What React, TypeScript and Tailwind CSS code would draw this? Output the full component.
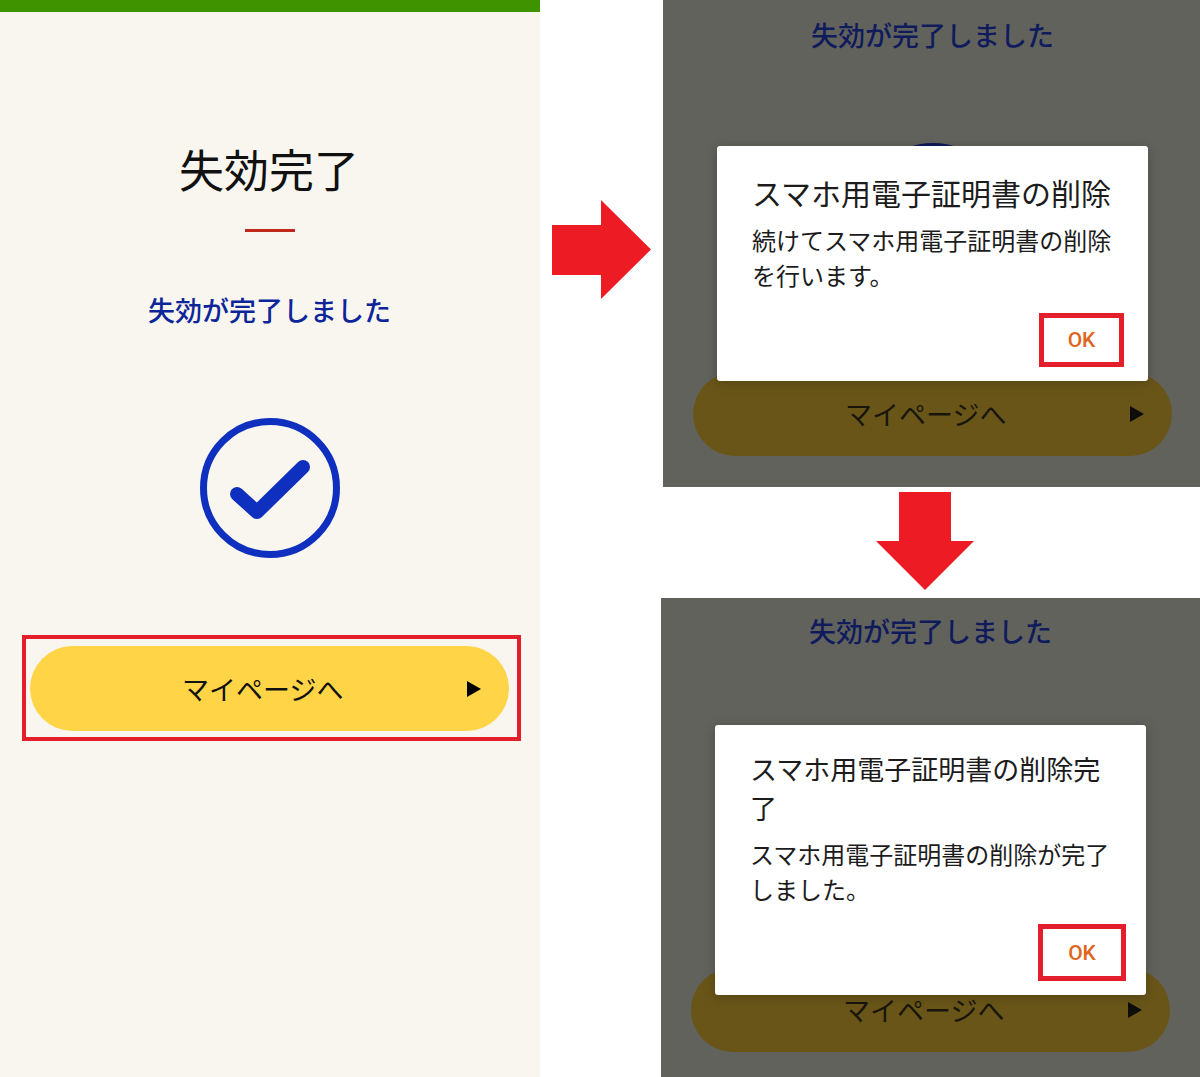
import type { ReactNode } from "react";

const jp = "font-['Noto_Sans_CJK_JP','Noto_Sans',sans-serif]";

function RightArrow() {
  return (
    <svg width="99" height="99" viewBox="0 0 99 99" className="block" aria-hidden="true">
      <path d="M0 25H49V0L99 49.5L49 99V75H0Z" fill="#ed1c24" />
    </svg>
  );
}

function DownArrow() {
  return (
    <svg width="98" height="98" viewBox="0 0 98 98" className="block" aria-hidden="true">
      <path d="M23 0H75V49H98L49 98L0 49H23Z" fill="#ed1c24" />
    </svg>
  );
}

function CheckCircle({ color }: { color: string }) {
  return (
    <svg width="140" height="140" viewBox="0 0 140 140" className="block" aria-hidden="true">
      <circle cx="70" cy="70" r="66.5" fill="none" stroke={color} strokeWidth="7" />
      <path d="M37 76L57 94L103 49" fill="none" stroke={color} strokeWidth="14" strokeLinecap="round" strokeLinejoin="round" />
    </svg>
  );
}

function Pill({ dimmed }: { dimmed?: boolean }) {
  return (
    <div className={`flex w-[479px] items-center rounded-full ${dimmed ? "h-[84px] bg-[#695518]" : "h-[85px] bg-[#ffd447]"}`}>
      <span className={`ml-[152px] text-[27px] leading-[34px] ${dimmed ? "text-[#17150c]" : "text-[#111111]"}`}>マイページへ</span>
      <svg width="14" height="16" viewBox="0 0 14 16" className="ml-auto mr-[28px] block" aria-hidden="true">
        <path d="M0 0L14 8L0 16Z" fill={dimmed ? "#0d0d0a" : "#000000"} />
      </svg>
    </div>
  );
}

function Dialog({
  title,
  body,
  className,
  titleClass,
  bodyClass,
  okClass,
}: {
  title: string;
  body: string;
  className: string;
  titleClass: string;
  bodyClass: string;
  okClass: string;
}) {
  return (
    <div className={`absolute flex w-[431px] flex-col rounded-[3px] bg-white pl-[35px] pr-[30px] text-[#1c1c1c] shadow-[0_2px_12px_rgba(0,0,0,0.22)] ${className}`}>
      <h2 className={`leading-[39px] font-normal ${titleClass}`}>{title}</h2>
      <p className={`text-[24px] leading-[35px] ${bodyClass}`}>{body}</p>
      <div className={`absolute flex items-center justify-center border-[5px] border-[#e41e2b] font-['Roboto',sans-serif] text-[21px] font-medium text-[#e0651c] ${okClass}`}>
        OK
      </div>
    </div>
  );
}

function DimmedScreen({ topOffset, className, children }: { topOffset: string; className: string; children: ReactNode }) {
  return (
    <div className={`relative overflow-hidden bg-[#62625c] ${className}`}>
      <div className={`flex w-[539px] flex-col items-center ${topOffset}`}>
        <p className="h-[30px] text-[27px] leading-[30px] font-medium text-[#101b5c]">失効が完了しました</p>
        <div className="mt-[93px]">
          <CheckCircle color="#0e1a5a" />
        </div>
        <div className="mt-[89px]">
          <Pill dimmed />
        </div>
      </div>
      {children}
    </div>
  );
}

export default function App() {
  return (
    <div className={`flex h-[1077px] w-[1200px] overflow-hidden bg-white ${jp}`}>
      {/* left: finished screen */}
      <div className="flex h-full w-[540px] shrink-0 flex-col bg-[#f9f6ef]">
        <div className="h-3 bg-[#3f9200]" />
        <div className="flex w-[539px] flex-col items-center">
          <h1 className="-ml-[1px] mt-[126px] text-[45px] leading-[62px] font-normal text-[#111111]">失効完了</h1>
          <div className="mt-[29px] h-[3px] w-[50px] bg-[#c0281c]" />
          <p className="mt-[63px] h-[30px] text-[27px] leading-[30px] font-medium text-[#0c2599]">失効が完了しました</p>
          <div className="mt-[93px]">
            <CheckCircle color="#0f2fbe" />
          </div>
        </div>
        <div className="ml-[22px] mt-[77px] w-[499px] border-4 border-[#e41e2b] px-1 pb-[6px] pt-[7px]">
          <Pill />
        </div>
      </div>

      {/* right: the two dialogs */}
      <div className="flex min-w-0 flex-1 flex-col">
        <div className="flex h-[487px]">
          <div className="ml-3 mt-[200px]">
            <RightArrow />
          </div>
          <DimmedScreen topOffset="-mt-[16px] pt-[36px]" className="ml-auto h-[487px] w-[537px]">
            <Dialog
              title="スマホ用電子証明書の削除"
              body="続けてスマホ用電子証明書の削除を行います。"
              className="left-[54px] top-[146px] h-[235px] pt-[27px]"
              titleClass="text-[30px]"
              bodyClass="mt-[10px]"
              okClass="left-[322px] top-[167px] h-[54px] w-[85px] pt-[1px]"
            />
          </DimmedScreen>
        </div>
        <div className="h-[111px] pl-[336px] pt-[5px]">
          <DownArrow />
        </div>
        <DimmedScreen topOffset="pt-[18px]" className="ml-[121px] h-[479px] w-[539px]">
          <Dialog
            title="スマホ用電子証明書の削除完了"
            body="スマホ用電子証明書の削除が完了しました。"
            className="left-[54px] top-[127px] h-[270px] pt-[24px]"
            titleClass="text-[27px]"
            bodyClass="mt-[9px]"
            okClass="left-[323px] top-[199px] h-[57px] w-[88px] pt-[3px]"
          />
        </DimmedScreen>
      </div>
    </div>
  );
}
